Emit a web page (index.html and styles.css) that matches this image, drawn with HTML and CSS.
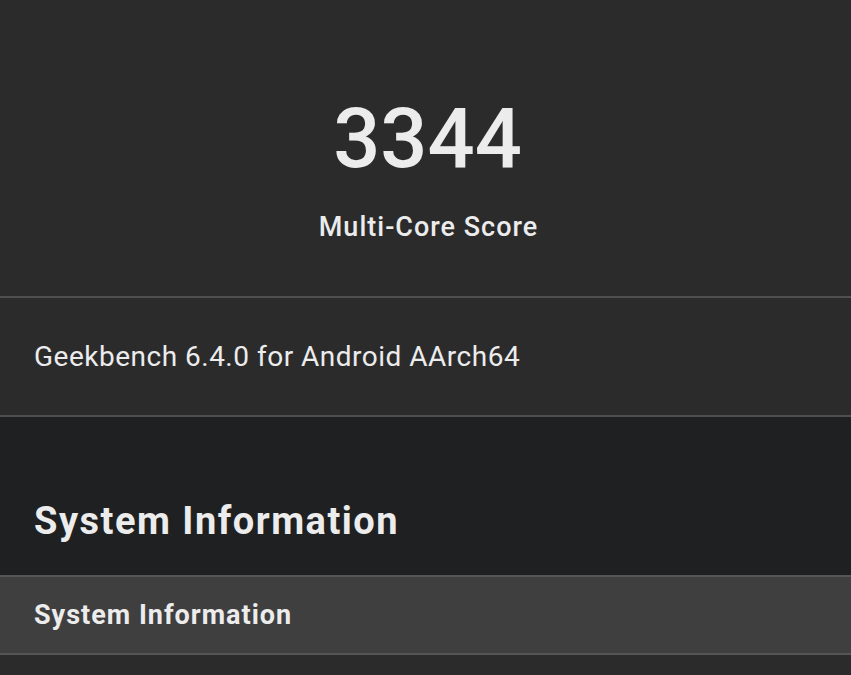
FILE: index.html
```html
<!DOCTYPE html>
<html>
<head>
<meta charset="utf-8">
<link rel="stylesheet" href="styles.css">
</head>
<body>
<div class="page">
  <section class="score">
    <div class="score-value">3344</div>
    <div class="score-label">Multi-Core Score</div>
  </section>
  <section class="version">Geekbench 6.4.0 for Android AArch64</section>
  <section class="heading">
    <h1>System Information</h1>
  </section>
  <section class="table-head">System Information</section>
  <section class="rest"></section>
</div>
</body>
</html>
```

FILE: styles.css
```css
html, body {
  margin: 0;
  padding: 0;
  background: #2b2b2c;
}
body {
  font-family: Roboto, "Noto Sans", sans-serif;
  color: #ececec;
  width: 851px;
  height: 675px;
  overflow: hidden;
}
.page {
  display: flex;
  flex-direction: column;
}
.score {
  height: 298px;
  display: flex;
  flex-direction: column;
  align-items: center;
  border-bottom: 2px solid #4f4f50;
  box-sizing: border-box;
}
.score-value {
  margin-top: 89px;
  font-size: 83px;
  line-height: 100px;
  font-weight: 500;
  margin-left: 4px;
}
.score-label {
  margin-top: 22px;
  margin-left: 6px;
  font-size: 27px;
  line-height: 32px;
  font-weight: 500;
  letter-spacing: 1px;
}
.version {
  height: 119px;
  box-sizing: border-box;
  border-bottom: 2px solid #4f4f50;
  padding-left: 34px;
  display: flex;
  align-items: center;
  font-size: 28px;
  line-height: 34px;
  font-weight: 400;
  letter-spacing: 0.5px;
}
.heading {
  height: 158px;
  background: #1f2022;
  display: flex;
  align-items: flex-end;
  padding: 0 34px 32px;
  box-sizing: border-box;
}
.heading h1 {
  margin: 0;
  font-size: 38px;
  line-height: 44px;
  font-weight: 700;
  letter-spacing: 1.5px;
}
.table-head {
  height: 80px;
  box-sizing: border-box;
  background: #3f3f40;
  border-top: 2px solid #555556;
  border-bottom: 2px solid #555556;
  padding-left: 34px;
  display: flex;
  align-items: center;
  font-size: 27px;
  line-height: 32px;
  font-weight: 700;
  letter-spacing: 1px;
}
.rest {
  height: 40px;
  background: #2b2b2c;
}
```
